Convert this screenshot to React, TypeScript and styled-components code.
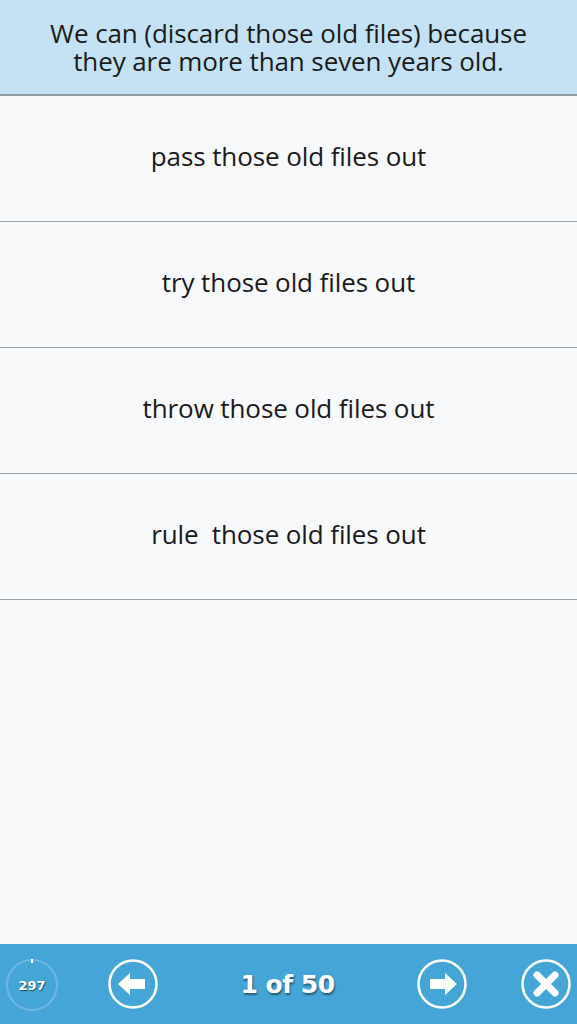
import React from 'react';
import styled, { createGlobalStyle } from 'styled-components';

const GlobalStyle = createGlobalStyle`
  html, body {
    margin: 0;
    padding: 0;
    background: #f8f9fb;
  }
  body {
    font-family: "Open Sans", "Noto Sans", sans-serif;
  }
`;

const options = [
  'pass those old files out',
  'try those old files out',
  'throw those old files out',
  'rule\u00a0 those old files out',
];

const Screen = styled.div`
  width: 577px;
  height: 1024px;
  display: flex;
  flex-direction: column;
  background: #f8f9fb;
  overflow: hidden;
`;

const Question = styled.div`
  height: 96px;
  box-sizing: border-box;
  background: #c4e2f4;
  border-bottom: 2px solid #8e9aa2;
  display: flex;
  flex-direction: column;
  align-items: center;
  justify-content: center;
  text-align: center;
  padding: 0 10px;
  color: #1a1a1a;
  font-size: 26px;
  line-height: 28px;
  letter-spacing: -0.1px;
`;

const QuestionLine = styled.div`
  white-space: nowrap;
`;

const OptionList = styled.div`
  flex: 1;
  display: flex;
  flex-direction: column;
`;

const Option = styled.div`
  height: 126px;
  box-sizing: border-box;
  border-bottom: 1px solid #9aa3a8;
  display: flex;
  align-items: center;
  justify-content: center;
  color: #1a1a1a;
  font-size: 26px;
  letter-spacing: -0.1px;
  padding-bottom: 6px;
`;

const Footer = styled.div`
  height: 80px;
  background: #45a5d7;
  display: flex;
  align-items: center;
  padding: 0 6px;
`;

const Timer = styled.div`
  position: relative;
  width: 52px;
  height: 52px;
  border-radius: 50%;
  border: 2px solid rgba(255, 255, 255, 0.22);
  box-sizing: border-box;
  display: flex;
  align-items: center;
  justify-content: center;
  color: #fff;
  font-family: "DejaVu Sans", sans-serif;
  font-weight: bold;
  font-size: 13px;
  text-shadow: 1px 1px 1px rgba(0, 0, 0, 0.5);
  margin-top: 2px;
`;

const Tick = styled.span`
  position: absolute;
  top: -2px;
  left: 50%;
  width: 2px;
  height: 4px;
  margin-left: -1px;
  background: #fff;
`;

const NavButton = styled.div`
  width: 50px;
  height: 50px;
  display: flex;
  align-items: center;
  justify-content: center;
`;

const Counter = styled.div`
  flex: 1;
  text-align: center;
  color: #fff;
  font-family: "DejaVu Sans", sans-serif;
  font-weight: bold;
  font-size: 25px;
  letter-spacing: -0.5px;
  text-shadow: 1px 2px 2px rgba(0, 0, 0, 0.45);
`;

const Spacer = styled.div<{ w: number }>`
  width: ${p => p.w}px;
  flex-shrink: 0;
`;

const ArrowIcon = ({ dir }: { dir: 'left' | 'right' }) => (
  <svg width="50" height="50" viewBox="0 0 50 50">
    <circle cx="25" cy="25" r="23.5" fill="none" stroke="#fff" strokeWidth="2.5" />
    <path
      d="M10 25 L22 14 L22 20 L37 20 L37 30 L22 30 L22 36 Z"
      fill="#fff"
      transform={dir === 'right' ? 'rotate(180 25 25)' : undefined}
    />
  </svg>
);

const CloseIcon = () => (
  <svg width="50" height="50" viewBox="0 0 50 50">
    <circle cx="25" cy="25" r="23.5" fill="none" stroke="#fff" strokeWidth="2.5" />
    <path d="M16 16 L34 34 M34 16 L16 34" stroke="#fff" strokeWidth="7" strokeLinecap="round" />
  </svg>
);

export default function App() {
  return (
    <>
      <GlobalStyle />
      <Screen>
        <Question>
          <QuestionLine>We can (discard those old files) because</QuestionLine>
          <QuestionLine>they are more than seven years old.</QuestionLine>
        </Question>
        <OptionList>
          {options.map(o => (
            <Option key={o}>{o}</Option>
          ))}
        </OptionList>
        <Footer>
          <Timer>
            <Tick />
            297
          </Timer>
          <Spacer w={50} />
          <NavButton>
            <ArrowIcon dir="left" />
          </NavButton>
          <Counter>1 of 50</Counter>
          <NavButton>
            <ArrowIcon dir="right" />
          </NavButton>
          <Spacer w={54} />
          <NavButton>
            <CloseIcon />
          </NavButton>
        </Footer>
      </Screen>
    </>
  );
}
